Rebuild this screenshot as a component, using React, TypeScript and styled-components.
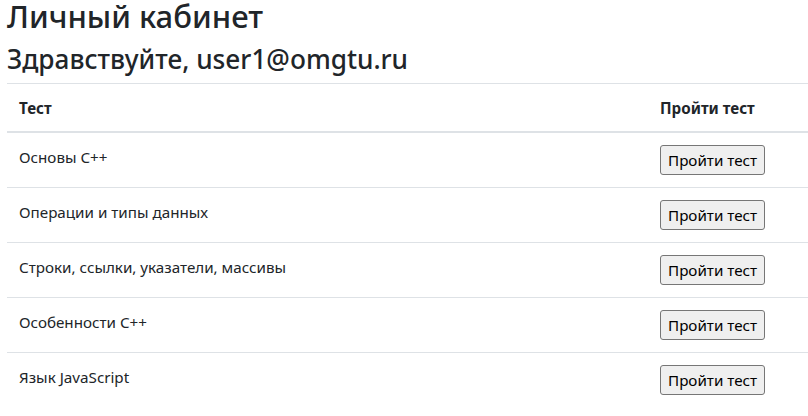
import React from "react";
import styled, { createGlobalStyle } from "styled-components";

const Global = createGlobalStyle`
  html, body { margin: 0; padding: 0; background: #fff; overflow: hidden; }
  body {
    font-family: "Noto Sans", "Open Sans", sans-serif;
    font-size: 15.2px;
    line-height: 24px;
    color: #212529;
  }
`;

const Page = styled.div`
  padding-left: 7px;
  width: 801px;
`;

const Title = styled.h1`
  margin: 0;
  font-size: 31px;
  font-weight: 500;
  line-height: 32px;
`;

const Greeting = styled.h2`
  margin: 11px 0 8px;
  font-size: 26.2px;
  font-weight: 500;
  line-height: 32px;
`;

const Table = styled.table`
  width: 100%;
  border-collapse: collapse;
`;

const HeadCell = styled.th<{ $w?: number }>`
  text-align: left;
  font-weight: 700;
  padding: 12px 12px 11px;
  border-top: 1px solid #dee2e6;
  border-bottom: 2px solid #dee2e6;
  vertical-align: bottom;
  ${(p) => (p.$w ? `width: ${p.$w}px;` : "")}
`;

const Cell = styled.td`
  padding: 12px;
  border-top: 1px solid #dee2e6;
  vertical-align: top;
`;

const Button = styled.button`
  font-family: inherit;
  font-size: 15.2px;
  line-height: 24px;
  color: #000;
  background: #efefef;
  border: 1px solid #767676;
  border-radius: 3px;
  padding: 2px 7px;
  margin: 0;
`;

const tests = [
  "Основы C++",
  "Операции и типы данных",
  "Строки, ссылки, указатели, массивы",
  "Особенности C++",
  "Язык JavaScript",
];

export default function App() {
  return (
    <>
      <Global />
      <Page>
        <Title>Личный кабинет</Title>
        <Greeting>Здравствуйте, user1@omgtu.ru</Greeting>
        <Table>
          <thead>
            <tr>
              <HeadCell>Тест</HeadCell>
              <HeadCell $w={136}>Пройти тест</HeadCell>
            </tr>
          </thead>
          <tbody>
            {tests.map((t) => (
              <tr key={t}>
                <Cell>{t}</Cell>
                <Cell>
                  <Button>Пройти тест</Button>
                </Cell>
              </tr>
            ))}
          </tbody>
        </Table>
      </Page>
    </>
  );
}
